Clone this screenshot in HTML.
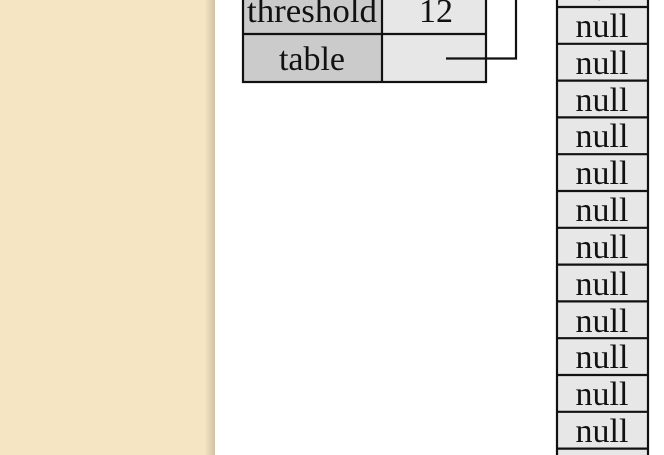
<!DOCTYPE html>
<html><head><style>
html,body{margin:0;padding:0;width:664px;height:455px;overflow:hidden;background:#fff}
</style></head><body>
<svg width="664" height="455" viewBox="0 0 664 455" xmlns="http://www.w3.org/2000/svg" style="display:block">
<defs><linearGradient id="sh" x1="0" x2="1" y1="0" y2="0">
<stop offset="0" stop-color="#f5e4c0"/><stop offset="1" stop-color="#cfc2a6"/></linearGradient></defs>
<rect x="0" y="0" width="205" height="455" fill="#f6e5c3"/>
<rect x="205" y="0" width="10" height="455" fill="url(#sh)"/>
<rect x="215" y="0" width="449" height="455" fill="#fff"/>
<g font-family="Liberation Serif, serif" font-size="34" fill="#111" text-anchor="middle">
<rect x="243" y="-20" width="139" height="102" fill="#cbcbcb"/>
<rect x="382" y="-20" width="104" height="102" fill="#e8e7e8"/>
<g stroke="#111" stroke-width="2.2" fill="none">
<rect x="243" y="-20" width="243" height="102"/>
<line x1="243" y1="34" x2="486" y2="34"/>
<line x1="382" y1="-20" x2="382" y2="82"/>
<polyline points="446,58.5 516,58.5 516,-2"/>
</g>
<text x="312" y="22" textLength="130" lengthAdjust="spacingAndGlyphs">threshold</text>
<text x="436" y="22">12</text>
<text x="312" y="70">table</text>
<rect x="557" y="-30" width="91" height="500" fill="#e8e7e8"/>
<g stroke="#111" stroke-width="2.2">
<line x1="557" y1="-5" x2="557" y2="460"/>
<line x1="648" y1="-5" x2="648" y2="460"/>
<line x1="557" y1="7" x2="648" y2="7"/>
<line x1="557" y1="43.8" x2="648" y2="43.8"/>
<line x1="557" y1="80.6" x2="648" y2="80.6"/>
<line x1="557" y1="117.4" x2="648" y2="117.4"/>
<line x1="557" y1="154.2" x2="648" y2="154.2"/>
<line x1="557" y1="191" x2="648" y2="191"/>
<line x1="557" y1="227.8" x2="648" y2="227.8"/>
<line x1="557" y1="264.6" x2="648" y2="264.6"/>
<line x1="557" y1="301.4" x2="648" y2="301.4"/>
<line x1="557" y1="338.2" x2="648" y2="338.2"/>
<line x1="557" y1="375" x2="648" y2="375"/>
<line x1="557" y1="411.8" x2="648" y2="411.8"/>
<line x1="557" y1="448.6" x2="648" y2="448.6"/>
</g>
<text x="602" y="0">null</text>
<text x="602" y="37">null</text>
<text x="602" y="74">null</text>
<text x="602" y="111">null</text>
<text x="602" y="147">null</text>
<text x="602" y="184">null</text>
<text x="602" y="221">null</text>
<text x="602" y="258">null</text>
<text x="602" y="295">null</text>
<text x="602" y="332">null</text>
<text x="602" y="368">null</text>
<text x="602" y="405">null</text>
<text x="602" y="442">null</text>
</g>
</svg>
</body></html>
